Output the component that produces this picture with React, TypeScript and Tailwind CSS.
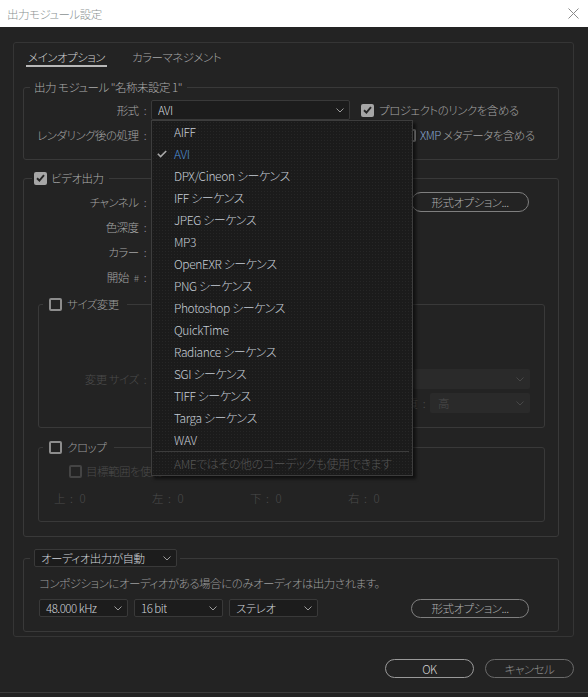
import React from 'react';

type Kids = { children?: React.ReactNode; className?: string };

const FORMATS = [
  'AIFF',
  'AVI',
  'DPX/Cineon シーケンス',
  'IFF シーケンス',
  'JPEG シーケンス',
  'MP3',
  'OpenEXR シーケンス',
  'PNG シーケンス',
  'Photoshop シーケンス',
  'QuickTime',
  'Radiance シーケンス',
  'SGI シーケンス',
  'TIFF シーケンス',
  'Targa シーケンス',
  'WAV',
];

const Chevron = ({ dim = false }: { dim?: boolean }) => (
  <svg width="8" height="5" viewBox="0 0 8 5" className="shrink-0">
    <polyline points="0.5,0.5 4,4 7.5,0.5" fill="none" stroke={dim ? '#474747' : '#9c9c9c'} strokeWidth="1" />
  </svg>
);

const CheckBox = ({ checked = false, dim = false }: { checked?: boolean; dim?: boolean }) => {
  if (checked) {
    return (
      <span className="flex h-[13px] w-[13px] shrink-0 items-center justify-center rounded-[2px] bg-[#a6a6a6]">
        <svg width="9" height="8" viewBox="0 0 9 8">
          <polyline points="1,4.2 3.4,6.5 8,1.2" fill="none" stroke="#262626" strokeWidth="1.9" />
        </svg>
      </span>
    );
  }
  return (
    <span
      className={
        'block h-[13px] w-[13px] shrink-0 rounded-[2px] border-2 ' + (dim ? 'border-[#444444]' : 'border-[#8d8d8d]')
      }
    />
  );
};

// label column with the trailing colon, right aligned
const Label = ({ children, className = '', dim = false }: Kids & { dim?: boolean }) => (
  <div className={'flex shrink-0 items-center justify-end ' + (dim ? 'text-[#4b4b4b] ' : '') + className}>
    <span>{children}</span>
    <span className={'ml-[5px] ' + (dim ? 'text-[#4b4b4b]' : 'text-[#8e879b]')}>:</span>
  </div>
);

const Select = ({ value, className = '', dim = false }: { value: string; className?: string; dim?: boolean }) => (
  <div
    className={
      'flex shrink-0 items-center justify-between rounded-[2px] border pl-[6px] pr-[5px] ' +
      (dim ? 'border-transparent bg-[#2a2a2a] text-[#4b4b4b] ' : 'border-[#393939] bg-[#1c1c1c] text-[#cfd3d9] ') +
      className
    }
  >
    <span className="truncate">{value}</span>
    <Chevron dim={dim} />
  </div>
);

const Pill = ({ children, className = '' }: Kids) => (
  <div className={'flex shrink-0 items-center justify-center rounded-full border ' + className}>{children}</div>
);

const Dropdown = () => (
  <div className="absolute left-0 top-[20px] z-10 w-[262px] border border-[#3d3d3d] bg-[#1b1b1b] bg-[radial-gradient(circle,#262626_0.6px,transparent_0.8px)] bg-[length:3px_3px] text-[12px] tracking-[-0.4px] shadow-[3px_3px_3px_rgba(0,0,0,0.55)]">
    {FORMATS.map((f) => (
      <div key={f} className={'flex h-[22px] items-center ' + (f === 'AVI' ? 'text-[#4d8dd6]' : 'text-[#c5ccd5]')}>
        <span className="flex w-[22px] shrink-0 pl-[5px]">
          {f === 'AVI' && (
            <svg width="10" height="8" viewBox="0 0 10 8">
              <polyline points="0.8,3.8 3.6,6.6 9.2,1" fill="none" stroke="#a9a9a9" strokeWidth="1.6" />
            </svg>
          )}
        </span>
        {f}
      </div>
    ))}
    <div className="mx-[3px] h-px bg-[#3c3c3c]" />
    <div className="flex h-[23px] items-center pl-[22px] text-[#555555]">AMEではその他のコーデックも使用できます</div>
  </div>
);

export default function App() {
  return (
    <div className="flex h-[697px] w-[588px] flex-col overflow-hidden bg-[#232323] font-['Noto_Sans_CJK_JP',sans-serif] text-[11.5px] font-light leading-[16px] tracking-[-0.5px] text-[#a3a3a3] [font-feature-settings:'palt']">
      {/* title bar */}
      <div className="flex h-[27px] shrink-0 items-center justify-between bg-white pl-[7px] pr-[9px]">
        <span className="text-[#8b9292]">出力モジュール設定</span>
        <svg width="11" height="11" viewBox="0 0 11 11">
          <path d="M0.5 0.5 L10.5 10.5 M10.5 0.5 L0.5 10.5" stroke="#8a8a8a" strokeWidth="1" />
        </svg>
      </div>

      {/* main panel */}
      <div className="ml-[13px] mt-[15px] w-[561px] shrink-0 rounded-[3px] border border-[#353535] pb-[4px]">
        <div className="flex pl-[12px] pt-[6px]">
          <div className="flex flex-col">
            <span className="px-[2px] text-[#d0d0d0]">メインオプション</span>
            <span className="h-[2px] bg-[#b8b8b8]" />
          </div>
          <span className="ml-[23px] px-[2px] text-[#a6a6a6]">カラーマネジメント</span>
        </div>

        {/* output module */}
        <fieldset className="ml-[9px] mr-[14px] mt-[12px] rounded-[3px] border border-[#393939] pb-[14px]">
          <legend className="ml-[6px] pl-[4px] pr-[5px] text-[#acacac]">出力 モジュール "名称未設定 1"</legend>
          <div className="mt-[5px] flex h-[20px] items-center">
            <Label className="w-[122px]">形式</Label>
            <div className="relative ml-[5px]">
              <Select className="h-[20px] w-[199px]" value="AVI" />
              <Dropdown />
            </div>
            <div className="ml-[11px]">
              <CheckBox checked />
            </div>
            <span className="ml-[5px]">プロジェクトのリンクを含める</span>
          </div>
          <div className="mt-[5px] flex h-[20px] items-center">
            <Label className="w-[122px]">レンダリング後の処理</Label>
            <Select className="ml-[5px] h-[20px] w-[199px]" value="" />
            <div className="ml-[53px]">
              <CheckBox />
            </div>
            <span className="ml-[4px]">
              <span className="text-[#86a4cf]">XMP</span> メタデータを含める
            </span>
          </div>
        </fieldset>

        {/* video output */}
        <fieldset className="ml-[9px] mr-[14px] mt-[10px] rounded-[3px] border border-[#393939] pb-[14px]">
          <legend className="ml-[8px] pl-[2px] pr-[6px]">
            <span className="flex h-[16px] items-center gap-[4px] text-[#acacac]">
              <CheckBox checked />
              ビデオ出力
            </span>
          </legend>
          <div className="mt-[6px] flex h-[20px] items-center">
            <Label className="w-[122px]">チャンネル</Label>
            <div className="flex-1" />
            <Pill className="mr-[29px] h-[20px] w-[118px] border-[#7f7f7f] text-[#adadad]">形式オプション...</Pill>
          </div>
          <div className="mt-[5px] flex h-[20px] items-center">
            <Label className="w-[122px]">色深度</Label>
          </div>
          <div className="mt-[5px] flex h-[20px] items-center">
            <Label className="w-[122px]">カラー</Label>
          </div>
          <div className="mt-[5px] flex h-[20px] items-center">
            <Label className="w-[122px]">
              開始<span className="ml-[5px] text-[10px] text-[#8a8a8a]">#</span>
            </Label>
          </div>

          {/* resize */}
          <fieldset className="ml-[14px] mr-[13px] mt-[9px] rounded-[3px] border border-[#393939] pb-[14px]">
            <legend className="ml-[4px] pl-[6px] pr-[8px]">
              <span className="flex h-[16px] items-center gap-[5px] text-[#9c9c9c]">
                <CheckBox />
                サイズ変更
              </span>
            </legend>
            <div className="mt-[57px] flex h-[20px] items-center">
              <Label dim className="w-[107px]">
                変更 サイズ
              </Label>
              <div className="flex-1" />
              <Select dim className="mr-[14px] h-[20px] w-[117px]" value="" />
            </div>
            <div className="mt-[4px] flex h-[20px] items-center justify-end">
              <Label dim>品質</Label>
              <Select dim className="ml-[5px] mr-[14px] h-[20px] w-[100px] pl-[7px]" value="高" />
            </div>
          </fieldset>

          {/* crop */}
          <fieldset className="ml-[14px] mr-[13px] mt-[11px] rounded-[3px] border border-[#393939] pb-[13px]">
            <legend className="ml-[4px] pl-[6px] pr-[8px]">
              <span className="flex h-[16px] items-center gap-[5px] text-[#9c9c9c]">
                <CheckBox />
                クロップ
              </span>
            </legend>
            <div className="mt-[6px] flex h-[20px] items-center gap-[4px] pl-[30px] text-[#4b4b4b]">
              <CheckBox dim />
              目標範囲を使用
            </div>
            <div className="mt-[7px] flex h-[20px] items-center pl-[15px] text-[#4b4b4b]">
              {['上', '左', '下', '右'].map((s) => (
                <div key={s} className="flex w-[98px] items-center">
                  <span>{s}</span>
                  <span className="ml-[5px]">:</span>
                  <span className="ml-[7px]">0</span>
                </div>
              ))}
            </div>
          </fieldset>
        </fieldset>

        {/* audio */}
        <fieldset className="ml-[9px] mr-[14px] mt-[12px] rounded-[3px] border border-[#393939] pb-[14px]">
          <legend className="ml-[6px] pl-[4px] pr-[3px]">
            <Select className="h-[18px] w-[143px]" value="オーディオ出力が自動" />
          </legend>
          <div className="mt-[8px] pl-[15px] text-[#9d9d9d]">
            コンポジションにオーディオがある場合にのみオーディオは出力されます。
          </div>
          <div className="mt-[8px] flex h-[18px] items-center pl-[15px]">
            <Select className="h-[18px] w-[89px]" value="48.000 kHz" />
            <Select className="ml-[6px] h-[18px] w-[89px]" value="16 bit" />
            <Select className="ml-[6px] h-[18px] w-[89px]" value="ステレオ" />
            <div className="flex-1" />
            <Pill className="mr-[29px] h-[19px] w-[118px] border-[#7f7f7f] text-[#adadad]">形式オプション...</Pill>
          </div>
        </fieldset>
      </div>

      {/* dialog buttons */}
      <div className="mt-[22px] flex shrink-0 justify-end gap-[11px] pr-[14px]">
        <Pill className="h-[19px] w-[89px] border-[#9a9a9a] text-[#d4d4d4]">OK</Pill>
        <Pill className="h-[19px] w-[89px] border-[#6a6a6a] text-[#8e8e8e]">キャンセル</Pill>
      </div>
      <div className="mt-[14px] h-px shrink-0 bg-[#3c3c3c]" />
    </div>
  );
}
